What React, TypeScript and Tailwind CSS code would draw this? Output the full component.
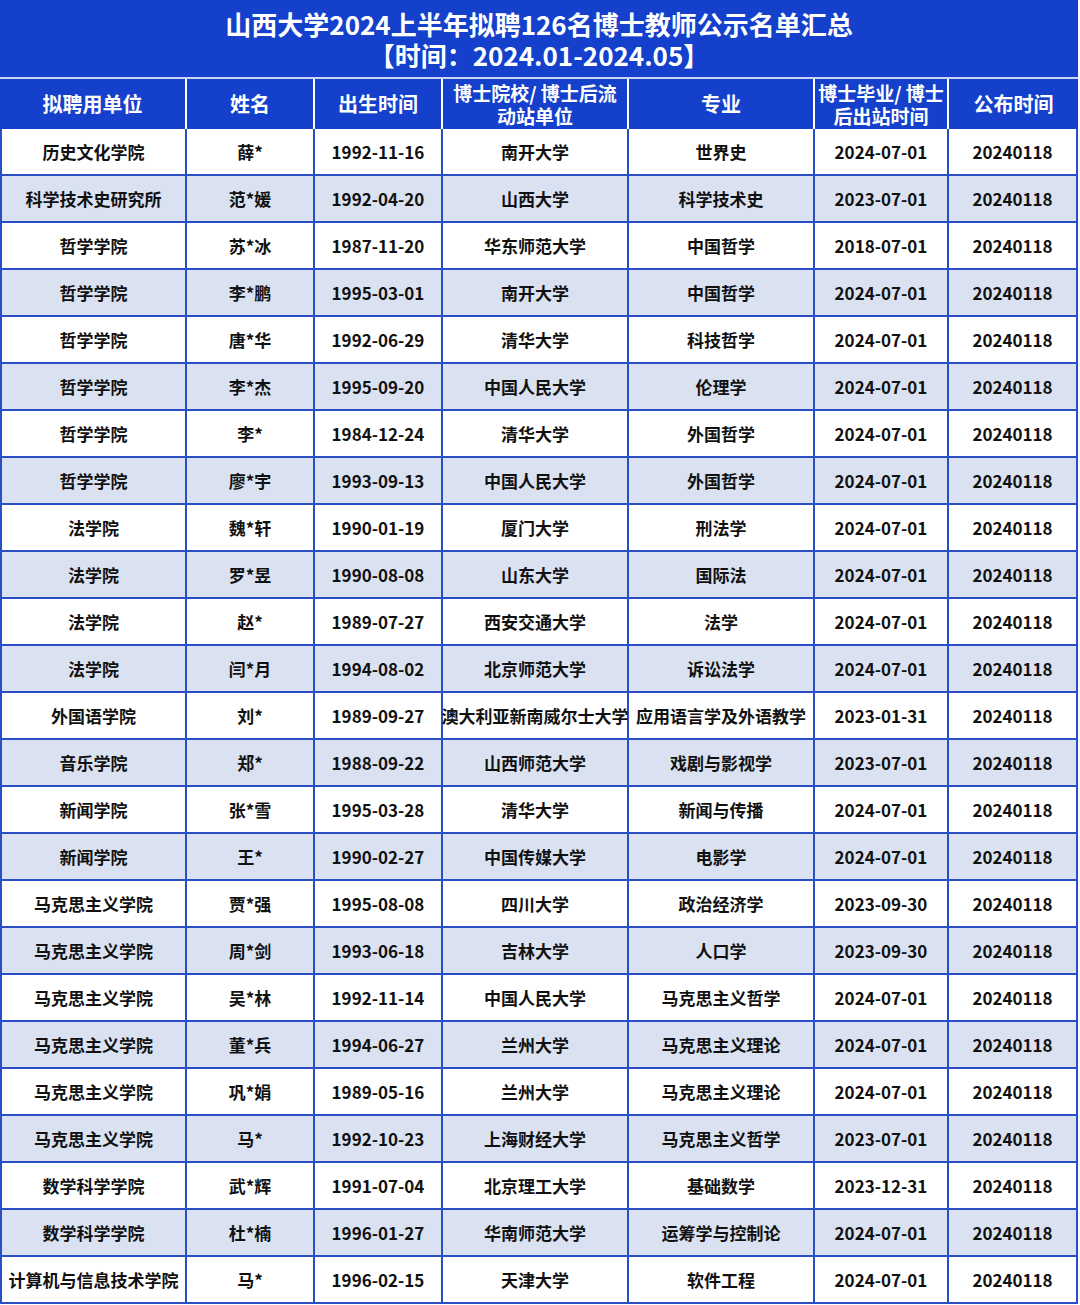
import React from "react";

const rows: string[][] = [
  ["历史文化学院", "薛*", "1992-11-16", "南开大学", "世界史", "2024-07-01", "20240118"],
  ["科学技术史研究所", "范*媛", "1992-04-20", "山西大学", "科学技术史", "2023-07-01", "20240118"],
  ["哲学学院", "苏*冰", "1987-11-20", "华东师范大学", "中国哲学", "2018-07-01", "20240118"],
  ["哲学学院", "李*鹏", "1995-03-01", "南开大学", "中国哲学", "2024-07-01", "20240118"],
  ["哲学学院", "唐*华", "1992-06-29", "清华大学", "科技哲学", "2024-07-01", "20240118"],
  ["哲学学院", "李*杰", "1995-09-20", "中国人民大学", "伦理学", "2024-07-01", "20240118"],
  ["哲学学院", "李*", "1984-12-24", "清华大学", "外国哲学", "2024-07-01", "20240118"],
  ["哲学学院", "廖*宇", "1993-09-13", "中国人民大学", "外国哲学", "2024-07-01", "20240118"],
  ["法学院", "魏*轩", "1990-01-19", "厦门大学", "刑法学", "2024-07-01", "20240118"],
  ["法学院", "罗*昱", "1990-08-08", "山东大学", "国际法", "2024-07-01", "20240118"],
  ["法学院", "赵*", "1989-07-27", "西安交通大学", "法学", "2024-07-01", "20240118"],
  ["法学院", "闫*月", "1994-08-02", "北京师范大学", "诉讼法学", "2024-07-01", "20240118"],
  ["外国语学院", "刘*", "1989-09-27", "澳大利亚新南威尔士大学", "应用语言学及外语教学", "2023-01-31", "20240118"],
  ["音乐学院", "郑*", "1988-09-22", "山西师范大学", "戏剧与影视学", "2023-07-01", "20240118"],
  ["新闻学院", "张*雪", "1995-03-28", "清华大学", "新闻与传播", "2024-07-01", "20240118"],
  ["新闻学院", "王*", "1990-02-27", "中国传媒大学", "电影学", "2024-07-01", "20240118"],
  ["马克思主义学院", "贾*强", "1995-08-08", "四川大学", "政治经济学", "2023-09-30", "20240118"],
  ["马克思主义学院", "周*剑", "1993-06-18", "吉林大学", "人口学", "2023-09-30", "20240118"],
  ["马克思主义学院", "吴*林", "1992-11-14", "中国人民大学", "马克思主义哲学", "2024-07-01", "20240118"],
  ["马克思主义学院", "董*兵", "1994-06-27", "兰州大学", "马克思主义理论", "2024-07-01", "20240118"],
  ["马克思主义学院", "巩*娟", "1989-05-16", "兰州大学", "马克思主义理论", "2024-07-01", "20240118"],
  ["马克思主义学院", "马*", "1992-10-23", "上海财经大学", "马克思主义哲学", "2023-07-01", "20240118"],
  ["数学科学学院", "武*辉", "1991-07-04", "北京理工大学", "基础数学", "2023-12-31", "20240118"],
  ["数学科学学院", "杜*楠", "1996-01-27", "华南师范大学", "运筹学与控制论", "2024-07-01", "20240118"],
  ["计算机与信息技术学院", "马*", "1996-02-15", "天津大学", "软件工程", "2024-07-01", "20240118"],
];

const widths = ["w-[187px]", "w-[128px]", "w-[128px]", "w-[186px]", "w-[186px]", "w-[134px]", "w-[129px]"];

const font = { fontFamily: '"Noto Sans CJK SC", "Noto Sans", sans-serif' };

export default function App() {
  return (
    <div className="w-[1080px] h-[1305px] bg-white" style={font}>
      <div className="w-[1078px]">
        <div className="h-[77px] bg-[#1440cc] flex flex-col items-center justify-center text-white font-bold text-[26px] leading-[31px] pt-[1px]">
          <div>山西大学2024上半年拟聘126名博士教师公示名单汇总</div>
          <div>【时间：2024.01-2024.05】</div>
        </div>
        <div className="h-[2px] bg-[#c9d4f2]" />
        <div className="flex h-[50px] bg-[#1440cc] text-white font-bold">
          {[
            ["拟聘用单位"],
            ["姓名"],
            ["出生时间"],
            ["博士院校/ 博士后流", "动站单位"],
            ["专业"],
            ["博士毕业/ 博士", "后出站时间"],
            ["公布时间"],
          ].map((h, i) => (
            <div
              key={i}
              className={`${widths[i]} shrink-0 flex flex-col items-center justify-center ${i < 6 ? "border-r-2 border-white" : ""} ${h.length > 1 ? "text-[19px] leading-[23px] pb-[1px]" : "text-[20px]"}`}
            >
              {h.map((t, j) => (
                <div key={j} className="whitespace-nowrap">{t}</div>
              ))}
            </div>
          ))}
        </div>
        <div className="border-l-2 border-r-2 border-[#2a4ec6]">
          {rows.map((r, ri) => (
            <div
              key={ri}
              className={`flex h-[47px] border-b-2 border-[#2a4ec6] ${ri % 2 === 1 ? "bg-[#dae2f2]" : "bg-white"} text-[17px] font-bold text-[#111]`}
            >
              {r.map((c, ci) => (
                <div
                  key={ci}
                  className={`${ci === 0 ? "w-[185px]" : ci === 6 ? "w-[127px]" : widths[ci]} shrink-0 flex items-center justify-center whitespace-nowrap pt-[1px] ${ci < 6 ? "border-r-2 border-[#2a4ec6]" : ""}`}
                >
                  {c}
                </div>
              ))}
            </div>
          ))}
        </div>
      </div>
    </div>
  );
}
